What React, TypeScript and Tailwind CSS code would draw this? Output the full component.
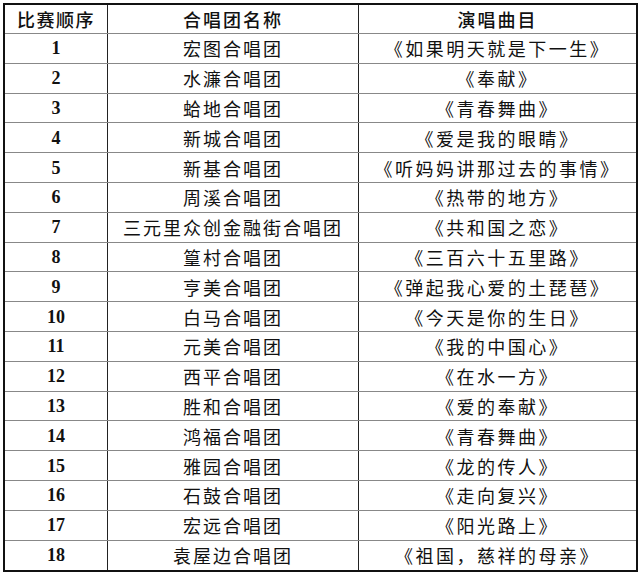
import React from "react";

const rows: [string, string, string][] = [
  ["1", "宏图合唱团", "《如果明天就是下一生》"],
  ["2", "水濂合唱团", "《奉献》"],
  ["3", "蛤地合唱团", "《青春舞曲》"],
  ["4", "新城合唱团", "《爱是我的眼睛》"],
  ["5", "新基合唱团", "《听妈妈讲那过去的事情》"],
  ["6", "周溪合唱团", "《热带的地方》"],
  ["7", "三元里众创金融街合唱团", "《共和国之恋》"],
  ["8", "篁村合唱团", "《三百六十五里路》"],
  ["9", "亨美合唱团", "《弹起我心爱的土琵琶》"],
  ["10", "白马合唱团", "《今天是你的生日》"],
  ["11", "元美合唱团", "《我的中国心》"],
  ["12", "西平合唱团", "《在水一方》"],
  ["13", "胜和合唱团", "《爱的奉献》"],
  ["14", "鸿福合唱团", "《青春舞曲》"],
  ["15", "雅园合唱团", "《龙的传人》"],
  ["16", "石鼓合唱团", "《走向复兴》"],
  ["17", "宏远合唱团", "《阳光路上》"],
  ["18", "袁屋边合唱团", "《祖国，慈祥的母亲》"],
];

const cjk = "font-['Noto_Sans_CJK_SC',sans-serif]";

export default function App() {
  return (
    <div className="w-[640px] h-[574px] bg-white pt-[3px] pl-[3px]">
      <div className="w-[635px] border-2 border-[#111] flex flex-col text-[#111]">
        <div className="grid grid-cols-[103px_251px_1fr] h-[29px] border-b border-[#888] items-stretch shrink-0">
          <div className={`${cjk} border-r border-[#222] flex items-center justify-center text-[18px] font-medium tracking-[1.5px] leading-none`}>
            比赛顺序
          </div>
          <div className={`${cjk} border-r border-[#222] flex items-center justify-center text-[18px] tracking-[2px] leading-none font-medium`}>
            合唱团名称
          </div>
          <div className={`${cjk} flex items-center justify-center text-[18px] tracking-[2px] leading-none font-medium`}>
            演唱曲目
          </div>
        </div>
        {rows.map(([n, name, song], i) => (
          <div
            key={n}
            className={`grid grid-cols-[103px_251px_1fr] h-[29.8px] items-stretch shrink-0 ${i < rows.length - 1 ? "border-b border-[#888]" : ""}`}
          >
            <div className="border-r border-[#222] flex items-center justify-center font-['Liberation_Serif',serif] font-bold text-[18px] leading-none">
              {n}
            </div>
            <div className={`${cjk} border-r border-[#222] flex items-center justify-center text-[18px] tracking-[2px] leading-none`}>
              {name}
            </div>
            <div className={`${cjk} flex items-center justify-center text-[18px] tracking-[2.5px] leading-none`}>
              {song}
            </div>
          </div>
        ))}
      </div>
    </div>
  );
}
